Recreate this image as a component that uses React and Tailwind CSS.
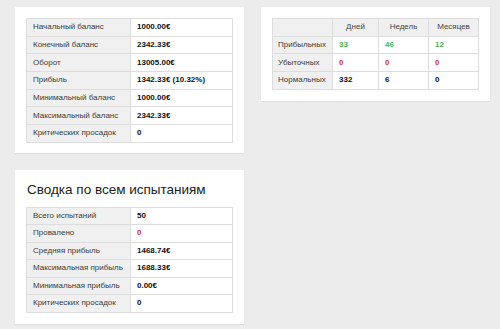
import React from "react";

const font = { fontFamily: '"Liberation Sans", Arial, sans-serif' };

function KV({ rows, rowH }) {
  return (
    <div className="border-t border-l border-[#dddddd] text-[8px]">
      {rows.map(([k, v, cls], i) => (
        <div key={i} className={`flex ${rowH}`}>
          <div className="w-[104px] flex items-center pl-[6px] bg-[#f0f0f0] border-r border-b border-[#dddddd] text-[#3a3a3a]">
            {k}
          </div>
          <div className={`flex-1 flex items-center pl-[6px] border-r border-b border-[#dddddd] font-bold ${cls || "text-[#111111]"}`}>
            {v}
          </div>
        </div>
      ))}
    </div>
  );
}

export default function App() {
  const green = "text-[#4cb050]";
  const red = "text-[#c9304f]";
  const rows1 = [
    ["Начальный баланс", "1000.00€"],
    ["Конечный баланс", "2342.33€"],
    ["Оборот", "13005.00€"],
    ["Прибыль", "1342.33€ (10.32%)"],
    ["Минимальный баланс", "1000.00€"],
    ["Максимальный баланс", "2342.33€"],
    ["Критических просадок", "0"],
  ];
  const rows3 = [
    ["Всего испытаний", "50"],
    ["Провалено", "0", red],
    ["Средняя прибыль", "1468.74€"],
    ["Максимальная прибыль", "1688.33€"],
    ["Минимальная прибыль", "0.00€"],
    ["Критических просадок", "0"],
  ];
  const cols = ["w-[60px]", "w-[46px]", "w-[50px]", "flex-1"];
  const stats = [
    ["Прибыльных", ["33", "46", "12"], green],
    ["Убыточных", ["0", "0", "0"], red],
    ["Нормальных", ["332", "6", "0"], "text-[#111111]"],
  ];
  return (
    <div style={font} className="min-h-[329px] w-[500px] bg-[#ececec] pt-[7px] pl-[15px]">
      <div className="flex items-start gap-[17px]">
        <div className="w-[229px] bg-white p-[11px] pb-[10px] shadow-[0_1px_1px_rgba(0,0,0,0.06)]">
          <KV rows={rows1} rowH="h-[17.67px]" />
        </div>
        <div className="w-[229px] bg-white p-[11px] pb-[11px] shadow-[0_1px_1px_rgba(0,0,0,0.06)]">
          <div className="border-t border-l border-[#dddddd] text-[8px]">
            <div className="flex h-[17.67px] bg-[#f0f0f0] text-[#444444]">
              <div className={`${cols[0]} border-r border-b border-[#dddddd]`} />
              {["Дней", "Недель", "Месяцев"].map((h, i) => (
                <div key={h} className={`${cols[i + 1]} flex items-center justify-center border-r border-b border-[#dddddd]`}>
                  {h}
                </div>
              ))}
            </div>
            {stats.map(([label, vals, cls]) => (
              <div key={label} className="flex h-[17.67px]">
                <div className={`${cols[0]} flex items-center pl-[5px] bg-[#f0f0f0] border-r border-b border-[#dddddd] text-[#3a3a3a]`}>
                  {label}
                </div>
                {vals.map((v, i) => (
                  <div key={i} className={`${cols[i + 1]} flex items-center pl-[6px] border-r border-b border-[#dddddd] font-bold ${cls}`}>
                    {v}
                  </div>
                ))}
              </div>
            ))}
          </div>
        </div>
      </div>
      <div className="mt-[17px] w-[229px] bg-white px-[11px] pt-[12px] pb-[11px] shadow-[0_1px_1px_rgba(0,0,0,0.06)]">
        <div className="text-[13.5px] leading-[16px] text-[#222222] pl-[1px] mb-[9px]">Сводка по всем испытаниям</div>
        <KV rows={rows3} rowH="h-[17.5px]" />
      </div>
    </div>
  );
}
